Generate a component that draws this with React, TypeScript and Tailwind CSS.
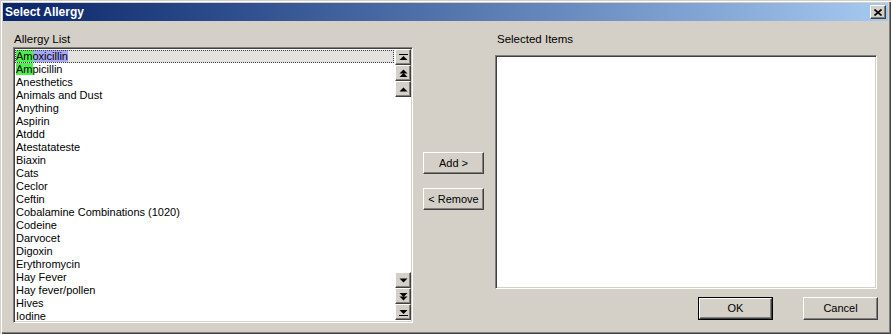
import React from "react";

const allergies = [
  "Ampicillin",
  "Anesthetics",
  "Animals and Dust",
  "Anything",
  "Aspirin",
  "Atddd",
  "Atestatateste",
  "Biaxin",
  "Cats",
  "Ceclor",
  "Ceftin",
  "Cobalamine Combinations (1020)",
  "Codeine",
  "Darvocet",
  "Digoxin",
  "Erythromycin",
  "Hay Fever",
  "Hay fever/pollen",
  "Hives",
  "Iodine",
];

const sunken =
  "border border-t-[#808080] border-l-[#808080] border-b-white border-r-white shadow-[inset_1px_1px_0_#404040,inset_-1px_-1px_0_#d4d0c8]";
const raised =
  "border border-t-white border-l-white border-b-[#404040] border-r-[#404040] shadow-[inset_-1px_-1px_0_#808080]";

function Arrow({ kind }: { kind: "top" | "pgup" | "up" | "down" | "pgdn" | "bottom" }) {
  return (
    <svg width="9" height="9" viewBox="0 0 9 9" className={kind === "down" || kind === "pgdn" || kind === "bottom" ? "rotate-180" : ""}>
      {(kind === "top" || kind === "bottom") && (
        <>
          <rect x="0" y="1" width="9" height="1" fill="#000" />
          <path d="M4.5 3 L8.5 7 L0.5 7 Z" fill="#000" />
        </>
      )}
      {(kind === "pgup" || kind === "pgdn") && (
        <>
          <path d="M4.5 0.5 L8.5 4.5 L0.5 4.5 Z" fill="#000" />
          <path d="M4.5 4 L8.5 8 L0.5 8 Z" fill="#000" />
        </>
      )}
      {(kind === "up" || kind === "down") && <path d="M4.5 2.5 L8.5 6.5 L0.5 6.5 Z" fill="#000" />}
    </svg>
  );
}

function ScrollBtn({ kind }: { kind: "top" | "pgup" | "up" | "down" | "pgdn" | "bottom" }) {
  return (
    <div className={`h-[16px] w-[16px] bg-[#d4d0c8] flex items-center justify-center ${raised}`}>
      <Arrow kind={kind} />
    </div>
  );
}

function Btn({ children, def, className }: { children: React.ReactNode; def?: boolean; className?: string }) {
  return (
    <div className={`${def ? "border border-black" : ""} ${className ?? ""}`}>
      <div className={`h-full w-full flex items-center justify-center bg-[#d4d0c8] text-black ${raised}`}>{children}</div>
    </div>
  );
}

export default function App() {
  return (
    <div
      className="w-[891px] h-[334px] bg-[#d4d0c8] p-[3px] flex flex-col text-[11px] text-black shadow-[inset_1px_1px_0_#d4d0c8,inset_2px_2px_0_#fff,inset_-1px_-1px_0_#404040,inset_-2px_-2px_0_#808080]"
      style={{ fontFamily: '"Liberation Sans", Arial, sans-serif' }}
    >
      <div className="h-[18px] flex items-center justify-between bg-gradient-to-r from-[#0a246a] to-[#a6caf0] pl-[2px] pr-[2px]">
        <span className="text-white font-bold text-[12px] leading-none">Select Allergy</span>
        <div className={`h-[14px] w-[16px] bg-[#d4d0c8] flex items-center justify-center ${raised}`}>
          <svg width="8" height="7" viewBox="0 0 8 7">
            <path d="M0.5 0.5 L7.5 6.5 M7.5 0.5 L0.5 6.5" stroke="#000" strokeWidth="1.6" />
          </svg>
        </div>
      </div>

      <div className="flex flex-1 pl-[10px]">
        <div className="w-[400px] flex flex-col pt-[12px]">
          <div className="h-[13px] leading-[13px] pl-[1px] text-[11.5px]">Allergy List</div>
          <div className={`mt-[1px] h-[276px] bg-white flex ${sunken} px-[1px] pt-[1px]`}>
            <div className="flex-1 flex flex-col pt-[1px]">
              <div className="h-[13px] leading-[13px] shrink-0 bg-[#e4e2de] outline-1 outline-dotted outline-[#404040] -outline-offset-1 pl-[1px] mr-[1px]">
                <span className="bg-[#4cf04c]">Am</span>
                <span className="bg-[#a8a8f8]">oxicillin</span>
              </div>
              {allergies.map((a, i) => (
                <div
                  key={a}
                  className={`${i === allergies.length - 1 ? "h-[12px]" : "h-[13px]"} leading-[13px] shrink-0 pl-[1px] whitespace-nowrap`}
                >
                  {i === 0 ? (
                    <>
                      <span className="bg-[#4cf04c]">Am</span>
                      {a.slice(2)}
                    </>
                  ) : (
                    a
                  )}
                </div>
              ))}
            </div>
            <div className="w-[16px] flex flex-col justify-between">
              <div className="flex flex-col">
                <ScrollBtn kind="top" />
                <ScrollBtn kind="pgup" />
                <ScrollBtn kind="up" />
              </div>
              <div className="flex flex-col mb-[2px]">
                <ScrollBtn kind="down" />
                <ScrollBtn kind="pgdn" />
                <ScrollBtn kind="bottom" />
              </div>
            </div>
          </div>
        </div>

        <div className="ml-[10px] w-[61px] flex flex-col pt-[131px] gap-[14px]">
          <Btn className="h-[22px]">Add &gt;</Btn>
          <Btn className="h-[22px]">&lt; Remove</Btn>
        </div>

        <div className="ml-[11px] w-[383px] flex flex-col pt-[12px]">
          <div className="h-[13px] leading-[13px] pl-[2px] text-[11.5px]">Selected Items</div>
          <div className={`mt-[9px] h-[234px] w-[382px] bg-white ${sunken}`} />
          <div className="mt-[8px] flex justify-end gap-[30px]">
            <Btn def className="h-[23px] w-[75px]">OK</Btn>
            <Btn className="h-[23px] w-[75px]">Cancel</Btn>
          </div>
        </div>
      </div>
    </div>
  );
}
